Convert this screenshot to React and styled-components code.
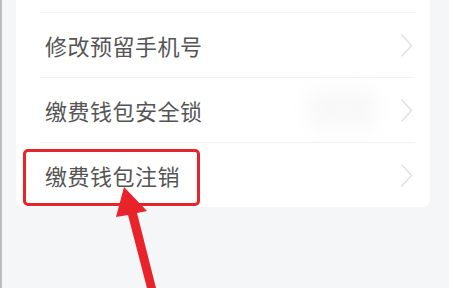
import React from 'react';
import styled, { createGlobalStyle } from 'styled-components';

const Global = createGlobalStyle`
  html, body {
    margin: 0;
    padding: 0;
    background: #f5f6f8;
  }
  body {
    font-family: "Noto Sans CJK SC", "Noto Sans", sans-serif;
  }
`

const Page = styled.div`
  position: relative;
  display: flex;
  width: 449px;
  height: 288px;
  overflow: hidden;
  background: #f5f6f8;
`

const Edge = styled.div`
  width: 2px;
  background: #bdbdbf;
`

const Card = styled.section`
  align-self: flex-start;
  width: 414px;
  margin-left: 14px;
  padding-top: 12px;
  background: #fff;
  border-radius: 0 0 8px 8px;
`

const Divider = styled.div`
  height: 1px;
  margin: 0 15px 0 24px;
  background: #f2f2f4;
`

const Row = styled.div`
  position: relative;
  display: flex;
  align-items: center;
  height: 64px;
  padding: 0 17px 0 29px;
`

const Label = styled.span`
  flex: 1;
  font-size: 22px;
  line-height: 1;
  color: #555;
  letter-spacing: 0.5px;
`

const Blur = styled.div`
  width: 70px;
  height: 38px;
  margin-right: 22px;
  border-radius: 10px;
  background: #efefef;
  filter: blur(10px);
  opacity: 0.45;
`

const Highlight = styled.div`
  position: absolute;
  left: 7px;
  top: 6px;
  width: 171px;
  height: 51px;
  border: 3px solid #e8232a;
  border-radius: 5px;
`

const Pointer = styled.svg`
  position: absolute;
  left: 0;
  top: 0;
  pointer-events: none;
`

const Chevron = () => (
  <svg width="13" height="25" viewBox="0 0 13 25">
    <polyline points="1.5,1.5 11.5,12.5 1.5,23.5" fill="none" stroke="#e2e2e2" strokeWidth="1.6" />
  </svg>
)

const rows = [
  { label: '修改预留手机号' },
  { label: '缴费钱包安全锁', blurred: true },
  { label: '缴费钱包注销', marked: true },
]

export default function App() {
  return (
    <Page>
      <Global />
      <Edge />
      <Card>
        {rows.map((row, i) => (
          <React.Fragment key={i}>
            <Divider />
            <Row>
              <Label>{row.label}</Label>
              {row.blurred ? <Blur /> : null}
              <Chevron />
              {row.marked ? <Highlight /> : null}
            </Row>
          </React.Fragment>
        ))}
      </Card>
      <Pointer width="449" height="288" viewBox="0 0 449 288">
        <path
          d="M124 187 L147 211 L137 213 L157 292 L148 292 L128 215 L116 217 Z"
          fill="#e8232a"
        />
      </Pointer>
    </Page>
  )
}
